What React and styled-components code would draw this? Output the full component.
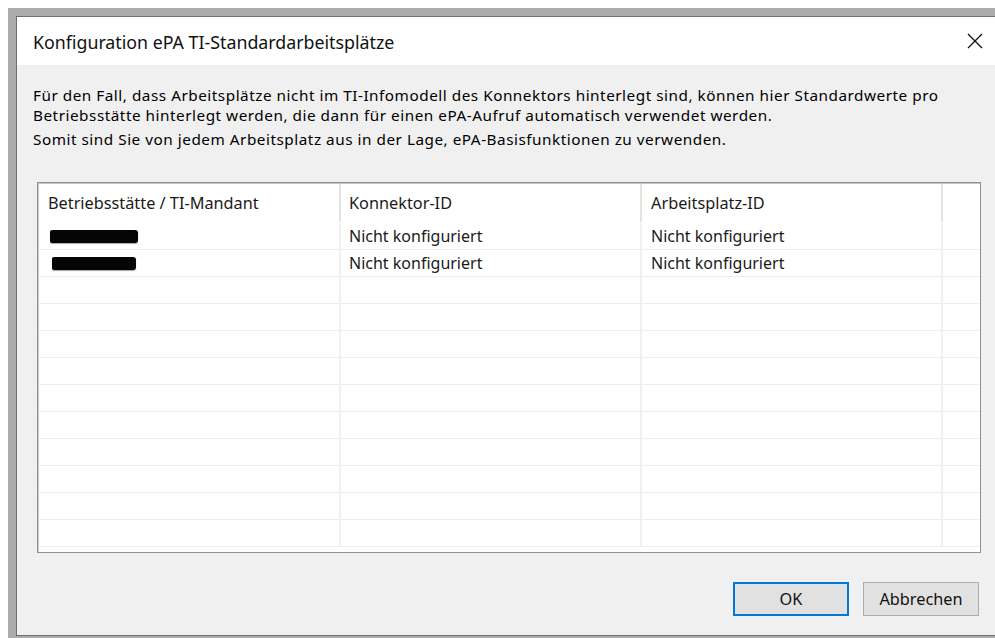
import React from 'react'
import styled, {createGlobalStyle} from 'styled-components'

const GlobalStyle = createGlobalStyle`
    html, body {
        margin: 0;
        padding: 0;
        background: #ffffff;
        overflow: hidden;
    }
    body {
        font-family: "Noto Sans", "Open Sans", "Liberation Sans", sans-serif;
        color: #000000;
    }
`

const Desktop = styled.div`
    margin: 8px 0 0 8px;
    padding: 8px 0 0 8px;
    height: 640px;
    background: #ababab;
`

const Window = styled.div`
    width: 990px;
    height: 618px;
    border: 1px solid #6e6e6e;
    border-right: none;
    background: #f0f0f0;
    display: flex;
    flex-direction: column;
`

const TitleBar = styled.div`
    height: 48px;
    flex-shrink: 0;
    background: #ffffff;
    display: flex;
    align-items: center;
    justify-content: space-between;
    padding-left: 16px;
`

const Title = styled.div`
    font-size: 17.8px;
    color: #111;
    padding-top: 1px;
`

const CloseButton = styled.div`
    width: 58px;
    height: 48px;
    margin-right: 3px;
    display: flex;
    align-items: center;
    justify-content: center;
`

const Body = styled.div`
    flex: 1;
    display: flex;
    flex-direction: column;
    padding: 20px 0 0 16px;
`

const Description = styled.div`
    font-size: 15.3px;
    letter-spacing: 0.52px;
    line-height: 20px;
    white-space: nowrap;
    margin-top: ${p => p.gap || 0}px;
`

const ListView = styled.div`
    flex-shrink: 0;
    margin: 33px 0 0 4px;
    width: 942px;
    height: 369px;
    border: 1px solid #8c9097;
    box-shadow: inset 1px 1px 0 #c4c7cc;
    background: #ffffff;
    overflow: hidden;
`

const Grid = styled.div`
    display: grid;
    grid-template-columns: 303px 301px 301px 1fr;
    grid-auto-rows: min-content;
`

const HeaderCell = styled.div`
    height: 40px;
    display: flex;
    align-items: center;
    padding-left: ${p => p.indent}px;
    font-size: 16.3px;
    color: #1a1a1a;
    position: relative;

    &::after {
        content: '';
        position: absolute;
        right: 0;
        top: 1px;
        bottom: 1px;
        width: 2px;
        background: ${p => (p.last ? 'transparent' : '#e3e3e3')};
    }
`

const Cell = styled.div`
    height: 26px;
    display: flex;
    align-items: center;
    padding-left: ${p => p.indent}px;
    font-size: 16px;
    color: #1a1a1a;
    border-bottom: 1px solid #eeeeee;
    border-right: ${p => (p.last ? 'none' : '2px solid #f0f0f0')};
`

const Redacted = styled.span`
    display: inline-block;
    width: ${p => p.width}px;
    height: 13px;
    margin-left: ${p => p.offset}px;
    background: #050505;
    border-radius: 2px 3px 3px 2px;
    box-shadow: 0 1px 1px rgba(0, 0, 0, 0.35);
`

const ButtonRow = styled.div`
    flex-shrink: 0;
    display: flex;
    justify-content: flex-end;
    gap: 14px;
    margin-top: 29px;
    padding-right: 8px;
    width: 946px;
`

const Button = styled.div`
    width: 116px;
    height: 34px;
    box-sizing: border-box;
    display: flex;
    align-items: center;
    justify-content: center;
    font-size: 16.3px;
    color: #111;
    background: #e1e1e1;
    border: ${p => (p.primary ? '2px solid #0078d7' : '1px solid #adadad')};
`

const columns = [
    {title: 'Betriebsstätte / TI-Mandant', indent: 10},
    {title: 'Konnektor-ID', indent: 8},
    {title: 'Arbeitsplatz-ID', indent: 9},
    {title: '', indent: 0, last: true},
]

const entries = [
    {mandant: 88, offset: 2, connector: 'Nicht konfiguriert', workstation: 'Nicht konfiguriert'},
    {mandant: 84, offset: 4, connector: 'Nicht konfiguriert', workstation: 'Nicht konfiguriert'},
]

const ROW_COUNT = 12

const App = () => {
    const rows = Array.from({length: ROW_COUNT}, (_, i) => entries[i] || null)

    return (
        <>
            <GlobalStyle />
            <Desktop>
                <Window>
                    <TitleBar>
                        <Title>Konfiguration ePA TI-Standardarbeitsplätze</Title>
                        <CloseButton>
                            <svg width="16" height="16" viewBox="0 0 16 16">
                                <path d="M1 1 L15 15 M15 1 L1 15" stroke="#111" strokeWidth="1.3" fill="none" />
                            </svg>
                        </CloseButton>
                    </TitleBar>
                    <Body>
                        <Description>
                            Für den Fall, dass Arbeitsplätze nicht im TI-Infomodell des Konnektors hinterlegt sind, können hier Standardwerte pro
                            <br />
                            Betriebsstätte hinterlegt werden, die dann für einen ePA-Aufruf automatisch verwendet werden.
                        </Description>
                        <Description gap={4}>
                            Somit sind Sie von jedem Arbeitsplatz aus in der Lage, ePA-Basisfunktionen zu verwenden.
                        </Description>
                        <ListView>
                            <Grid>
                                {columns.map((col, i) => (
                                    <HeaderCell key={`head-${i}`} indent={col.indent} last={col.last}>
                                        {col.title}
                                    </HeaderCell>
                                ))}
                                {rows.map((row, r) => (
                                    <React.Fragment key={`row-${r}`}>
                                        <Cell indent={columns[0].indent}>
                                            {row && <Redacted width={row.mandant} offset={row.offset} />}
                                        </Cell>
                                        <Cell indent={columns[1].indent}>{row && row.connector}</Cell>
                                        <Cell indent={columns[2].indent}>{row && row.workstation}</Cell>
                                        <Cell last />
                                    </React.Fragment>
                                ))}
                            </Grid>
                        </ListView>
                        <ButtonRow>
                            <Button primary>OK</Button>
                            <Button>Abbrechen</Button>
                        </ButtonRow>
                    </Body>
                </Window>
            </Desktop>
        </>
    )
}

export default App
